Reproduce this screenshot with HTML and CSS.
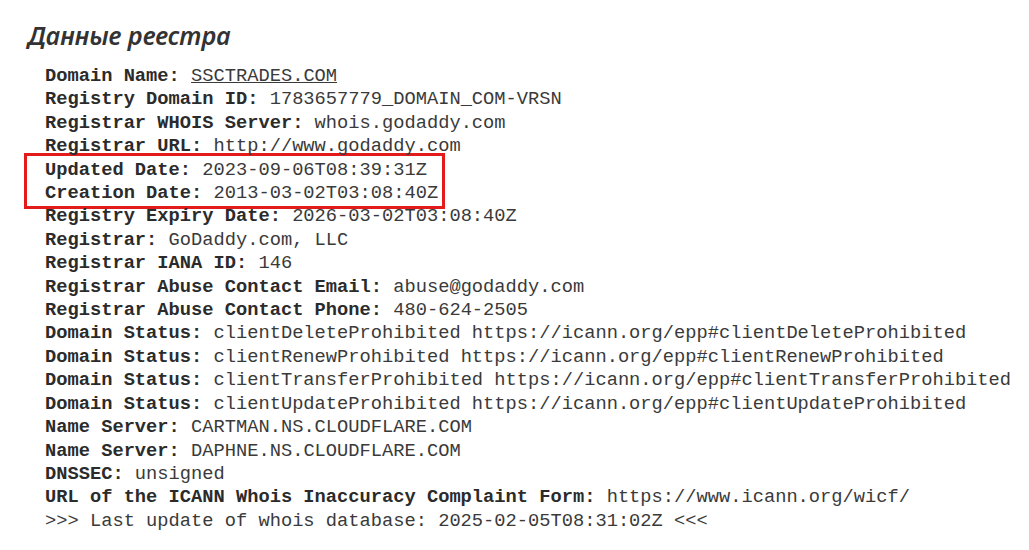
FILE: index.html
```html
<!DOCTYPE html>
<html lang="ru">
<head>
    <meta charset="UTF-8">
    <title>Данные реестра</title>
    <link rel="stylesheet" href="styles.css">
</head>
<body>
    <div class="section">
        <h2>Данные реестра</h2>
        <div class="whois">
            <div class="line"><b>Domain Name:</b> <a href="#">SSCTRADES.COM</a></div>
            <div class="line"><b>Registry Domain ID:</b> 1783657779_DOMAIN_COM-VRSN</div>
            <div class="line"><b>Registrar WHOIS Server:</b> whois.godaddy.com</div>
            <div class="line"><b>Registrar URL:</b> http://www.godaddy.com</div>
            <div class="highlight">
                <div class="line"><b>Updated Date:</b> 2023-09-06T08:39:31Z</div>
                <div class="line"><b>Creation Date:</b> 2013-03-02T03:08:40Z</div>
            </div>
            <div class="line"><b>Registry Expiry Date:</b> 2026-03-02T03:08:40Z</div>
            <div class="line"><b>Registrar:</b> GoDaddy.com, LLC</div>
            <div class="line"><b>Registrar IANA ID:</b> 146</div>
            <div class="line"><b>Registrar Abuse Contact Email:</b> abuse@godaddy.com</div>
            <div class="line"><b>Registrar Abuse Contact Phone:</b> 480-624-2505</div>
            <div class="line"><b>Domain Status:</b> clientDeleteProhibited https://icann.org/epp#clientDeleteProhibited</div>
            <div class="line"><b>Domain Status:</b> clientRenewProhibited https://icann.org/epp#clientRenewProhibited</div>
            <div class="line"><b>Domain Status:</b> clientTransferProhibited https://icann.org/epp#clientTransferProhibited</div>
            <div class="line"><b>Domain Status:</b> clientUpdateProhibited https://icann.org/epp#clientUpdateProhibited</div>
            <div class="line"><b>Name Server:</b> CARTMAN.NS.CLOUDFLARE.COM</div>
            <div class="line"><b>Name Server:</b> DAPHNE.NS.CLOUDFLARE.COM</div>
            <div class="line"><b>DNSSEC:</b> unsigned</div>
            <div class="line"><b>URL of the ICANN Whois Inaccuracy Complaint Form:</b> https://www.icann.org/wicf/</div>
            <div class="line">&gt;&gt;&gt; Last update of whois database: 2025-02-05T08:31:02Z &lt;&lt;&lt;</div>
        </div>
    </div>
</body>
</html>
```

FILE: styles.css
```css
body {
    margin: 0;
    background: #fff;
    color: #333;
}

.section {
    padding: 18px 0 0 28px;
}

h2 {
    margin: 0 0 13px 0;
    font-family: "Noto Sans", sans-serif;
    font-style: italic;
    font-weight: 600;
    font-size: 25px;
    line-height: 34px;
    color: #333;
}

.whois {
    padding-left: 17px;
    font-family: "Courier New", "Nimbus Mono PS", "FreeMono", "Liberation Mono", monospace;
    font-size: 18.73px;
    line-height: 23.4px;
    color: #3a3a3a;
}

.line {
    white-space: pre;
}

.whois b {
    color: #2b2b2b;
}

.whois a {
    color: #3a3a3a;
    text-decoration: underline;
}

.highlight {
    width: fit-content;
    margin: -6px 0 -4px -21px;
    padding: 3px 4px 1px 18px;
    border: 3px solid #e31b1b;
}
```
